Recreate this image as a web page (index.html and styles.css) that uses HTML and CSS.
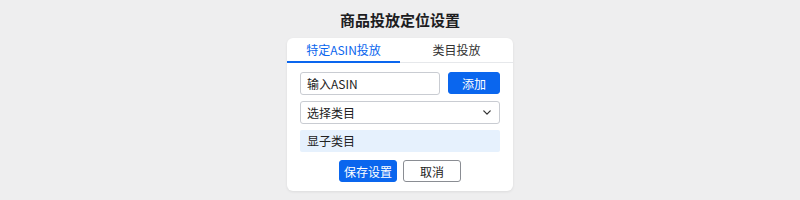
FILE: index.html
```html
<!DOCTYPE html>
<html lang="zh">
<head>
  <meta charset="UTF-8">
  <title>商品投放定位设置</title>
  <link rel="stylesheet" href="styles.css">
</head>
<body>
  <h1 class="page-title">商品投放定位设置</h1>
  <div class="panel">
    <div class="tabs">
      <div class="tab active">特定ASIN投放</div>
      <div class="tab">类目投放</div>
    </div>
    <div class="panel-body">
      <div class="asin-row">
        <input class="text-input" type="text" value="输入ASIN">
        <button class="btn btn-primary btn-add">添加</button>
      </div>
      <div class="select">
        <span>选择类目</span>
        <svg class="chevron" viewBox="0 0 10 6" width="8" height="5">
          <path d="M1 1l4 4 4-4" fill="none" stroke="#333" stroke-width="1.6" stroke-linecap="round" stroke-linejoin="round"/>
        </svg>
      </div>
      <div class="sub-item">显子类目</div>
      <div class="actions">
        <button class="btn btn-primary">保存设置</button>
        <button class="btn btn-default">取消</button>
      </div>
    </div>
  </div>
</body>
</html>
```

FILE: styles.css
```css
:root {
  --primary-color: #0a66ee;
  --background-color: #eeeeef;
  --text-color: #222222;
  --border-color: #c9ccd2;
  --light-blue: #e6f1fd;
}

body {
  margin: 0;
  height: 200px;
  background-color: var(--background-color);
  font-family: "Noto Sans CJK SC", "Noto Sans", sans-serif;
  color: var(--text-color);
  display: flex;
  flex-direction: column;
  align-items: center;
  overflow: hidden;
}

.page-title {
  margin: 9px 0 0;
  height: 29px;
  font-size: 15px;
  font-weight: 700;
  line-height: 22px;
  color: #1d1d1f;
}

.panel {
  width: 226px;
  background-color: #ffffff;
  border-radius: 6px;
  box-shadow: 0 1px 3px rgba(0, 0, 0, 0.08);
}

.tabs {
  display: flex;
  border-bottom: 1px solid #e6e8eb;
}

.tab {
  flex: 1;
  text-align: center;
  font-size: 12px;
  height: 23px;
  line-height: 24px;
  color: #333333;
  border-bottom: 2px solid transparent;
  margin-bottom: -1px;
}

.tab.active {
  color: var(--primary-color);
  border-bottom-color: var(--primary-color);
}

.panel-body {
  padding: 9px 13px 9px;
  display: flex;
  flex-direction: column;
}

.asin-row {
  display: flex;
  gap: 8px;
}

.text-input {
  width: 140px;
  box-sizing: border-box;
  height: 23px;
  border: 1px solid var(--border-color);
  border-radius: 3px;
  padding: 0 6px;
  font-family: inherit;
  font-size: 12px;
  color: #222222;
  outline: none;
}

.btn {
  font-family: inherit;
  font-size: 12px;
  height: 22px;
  border-radius: 3px;
  cursor: pointer;
  padding: 0;
}

.btn-primary {
  background-color: var(--primary-color);
  border: 1px solid var(--primary-color);
  color: #ffffff;
}

.btn-add {
  width: 52px;
}

.select {
  margin-top: 6px;
  height: 23px;
  box-sizing: border-box;
  border: 1px solid var(--border-color);
  border-radius: 3px;
  padding: 0 8px 0 6px;
  display: flex;
  align-items: center;
  justify-content: space-between;
  font-size: 12px;
}

.sub-item {
  margin-top: 6px;
  height: 22px;
  line-height: 22px;
  padding: 0 7px;
  background-color: var(--light-blue);
  border-radius: 2px;
  font-size: 12px;
}

.actions {
  margin-top: 8px;
  display: flex;
  justify-content: center;
  gap: 6px;
}

.actions .btn {
  width: 58px;
}

.btn-default {
  background-color: #ffffff;
  border: 1px solid #8a8d93;
  color: #222222;
}
```
